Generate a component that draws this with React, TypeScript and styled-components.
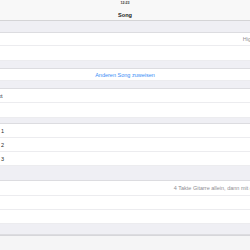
import React from 'react';
import styled, { createGlobalStyle } from 'styled-components';

const GlobalStyle = createGlobalStyle`
  html, body {
    margin: 0;
    padding: 0;
    background: #f5f5f7;
    overflow: hidden;
  }
  body {
    font-family: "Liberation Sans", Arial, sans-serif;
    -webkit-font-smoothing: antialiased;
  }
`;

const Viewport = styled.div`
  width: 250px;
  height: 250px;
  overflow: hidden;
  background: #efeff4;
`;

// the screen is wider than the crop, so labels and details run off both edges
const Screen = styled.div`
  width: 316px;
  margin-left: -33px;
  display: flex;
  flex-direction: column;
`;

const NavBar = styled.header`
  height: 20px;
  background: #f8f8f8;
  border-bottom: 1px solid #d4d4d6;
  display: flex;
  flex-direction: column;
  align-items: center;
`;

const StatusTime = styled.div`
  margin-top: 1px;
  font-size: 3.6px;
  font-weight: 700;
  color: #333;
  line-height: 5px;
`;

const NavTitle = styled.div`
  margin-top: 6px;
  font-size: 5.6px;
  font-weight: 700;
  color: #1a1a1a;
  line-height: 6px;
`;

const Gap = styled.div<{ $h: number }>`
  height: ${p => p.$h}px;
  background: #efeff4;
  border-bottom: 1px solid #dcdce0;
  box-sizing: border-box;
`;

const Row = styled.div<{ $h: number }>`
  height: ${p => p.$h}px;
  box-sizing: border-box;
  background: #ffffff;
  border-bottom: 1px solid #ececef;
  padding: 0 2px 0 5px;
  display: flex;
  align-items: center;
  justify-content: space-between;
  font-size: 5.5px;
  line-height: 6px;
  white-space: nowrap;
`;

const Label = styled.span`
  color: #2a2a2a;
`;

const Detail = styled.span`
  color: #8e8e93;
`;

const ActionRow = styled(Row)`
  justify-content: center;
  padding: 0 5px;
  color: #3a8ef6;
`;

const BottomBar = styled.footer`
  height: 16px;
  background: #f5f5f6;
  border-top: 1px solid #d6d6da;
`;

export default function App() {
  return (
    <>
      <GlobalStyle />
      <Viewport>
        <Screen>
          <NavBar>
            <StatusTime>12:23</StatusTime>
            <NavTitle>Song</NavTitle>
          </NavBar>

          <Gap $h={12} />
          <Row $h={13}>
            <Label />
            <Detail>Highway to Hell</Detail>
          </Row>
          <Row $h={15}>
            <Label />
          </Row>

          <Gap $h={8} />
          <ActionRow $h={12}>Anderen Song zuweisen</ActionRow>

          <Gap $h={8} />
          <Row $h={14}>
            <Label>Eigener Text</Label>
          </Row>
          <Row $h={15}>
            <Label />
          </Row>

          <Gap $h={6} />
          {[1, 2, 3].map(n => (
            <Row key={n} $h={14}>
              <Label>Markierung {n}</Label>
            </Row>
          ))}

          <Gap $h={15} />
          <Row $h={15}>
            <Label />
            <Detail>4 Takte Gitarre allein, dann mit ganzer Band</Detail>
          </Row>
          <Row $h={14}>
            <Label />
          </Row>
          <Row $h={14}>
            <Label />
          </Row>

          <Gap $h={11} />
          <BottomBar />
        </Screen>
      </Viewport>
    </>
  );
}
